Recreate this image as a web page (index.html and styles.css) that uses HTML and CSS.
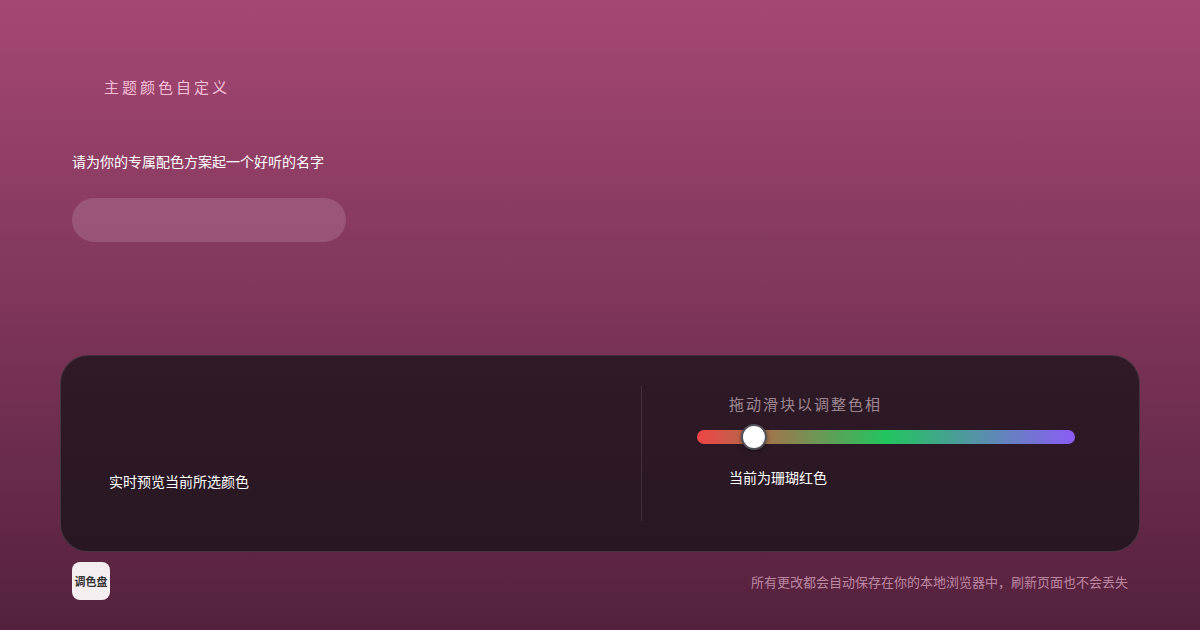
FILE: index.html
```html
<!DOCTYPE html>
<html lang="zh-CN">
<head>
    <meta charset="UTF-8">
    <meta name="viewport" content="width=device-width, initial-scale=1.0">
    <title>主题颜色自定义</title>
    <link rel="stylesheet" href="styles.css">
</head>
<body>
    <main class="page">
        <section class="intro">
            <p class="eyebrow">主题颜色自定义</p>
            <label class="field-label" for="themeName">请为你的专属配色方案起一个好听的名字</label>
            <div class="field" id="themeName"></div>
        </section>

        <section class="panel">
            <div class="preview">
                <span class="preview-text">实时预览当前所选颜色</span>
            </div>
            <div class="divider"></div>
            <div class="controls">
                <p class="control-label">拖动滑块以调整色相</p>
                <div class="slider">
                    <div class="track"></div>
                    <div class="thumb" style="left: 15%;"></div>
                </div>
                <p class="control-value">当前为珊瑚红色</p>
            </div>
        </section>

        <footer class="foot">
            <span class="badge">调色盘</span>
            <span class="note">所有更改都会自动保存在你的本地浏览器中，刷新页面也不会丢失</span>
        </footer>
    </main>
</body>
</html>
```

FILE: styles.css
```css
* {
    margin: 0;
    padding: 0;
    box-sizing: border-box;
    font-family: 'Noto Sans', 'Noto Sans CJK SC', sans-serif;
}

body {
    background: linear-gradient(180deg, #a54873 0%, #7d3558 50%, #54213c 100%);
    height: 100vh;
    overflow: hidden;
}

.page {
    height: 100%;
    display: flex;
    flex-direction: column;
    padding: 77px 60px 30px;
}

/* 顶部：标题 + 名称输入 */
.intro {
    padding: 0 12px;
}

.eyebrow {
    padding-left: 32px;
    font-size: 15px;
    line-height: 20px;
    letter-spacing: 3px;
    color: #f3bfd7;
}

.field-label {
    display: block;
    margin-top: 56px;
    font-size: 14px;
    line-height: 18px;
    color: #fff;
}

.field {
    margin-top: 27px;
    width: 274px;
    height: 44px;
    border-radius: 22px;
    background: rgba(255, 255, 255, 0.14);
}

/* 深色面板 */
.panel {
    margin-top: auto;
    height: 197px;
    display: grid;
    grid-template-columns: 532px 1px 1fr;
    padding: 30px 64px 30px 48px;
    background: linear-gradient(180deg, #2f1a27 0%, #281722 100%);
    border: 1px solid rgba(255, 255, 255, 0.12);
    border-radius: 28px;
}

.preview {
    display: flex;
    align-items: flex-end;
    padding-bottom: 30px;
}

.preview-text {
    font-size: 14px;
    line-height: 18px;
    color: #fff;
}

.divider {
    background: rgba(255, 255, 255, 0.1);
}

.controls {
    padding: 8px 0 0 55px;
}

.control-label {
    padding-left: 32px;
    font-size: 15px;
    line-height: 20px;
    letter-spacing: 2px;
    color: rgba(255, 230, 240, 0.55);
}

.slider {
    position: relative;
    height: 26px;
    margin-top: 10px;
    display: flex;
    align-items: center;
}

.track {
    width: 100%;
    height: 14px;
    border-radius: 7px;
    background: linear-gradient(90deg, #ef4444 0%, #22c55e 50%, #8b5cf6 100%);
}

.thumb {
    position: absolute;
    top: 0;
    width: 26px;
    height: 26px;
    margin-left: -13px;
    border-radius: 50%;
    background: #fff;
    border: 2px solid #52525b;
    box-shadow: 0 1px 4px rgba(0, 0, 0, 0.4);
}

.control-value {
    margin-top: 19px;
    padding-left: 32px;
    font-size: 14px;
    line-height: 18px;
    color: #fff;
}

/* 底部 */
.foot {
    margin-top: 10px;
    display: flex;
    align-items: center;
    justify-content: space-between;
    padding: 0 12px;
}

.badge {
    width: 38px;
    height: 38px;
    display: flex;
    align-items: center;
    justify-content: center;
    border-radius: 8px;
    background: #f4eef1;
    color: #333;
    font-size: 11px;
    font-weight: 700;
}

.note {
    font-size: 13px;
    color: rgba(255, 205, 228, 0.6);
}
```
